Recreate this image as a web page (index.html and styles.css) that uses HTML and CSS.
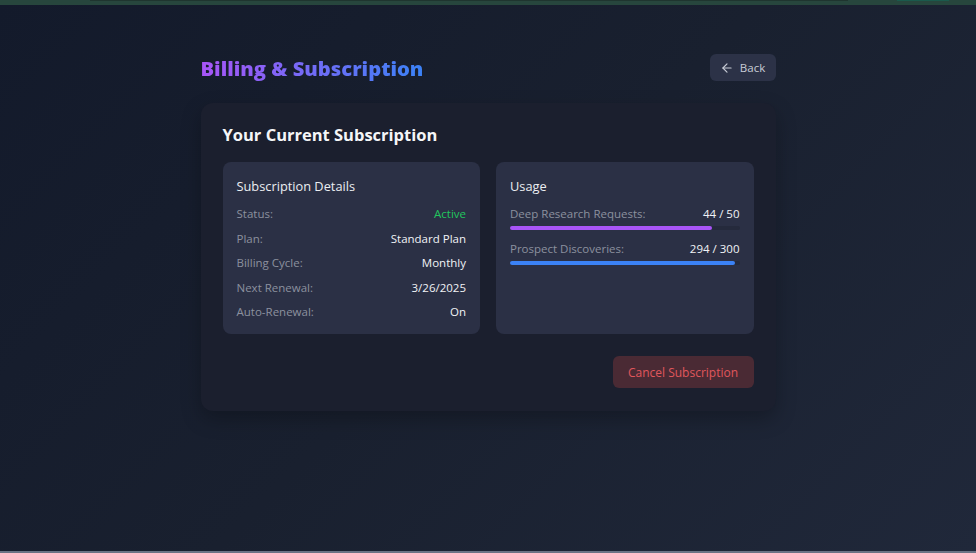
FILE: index.html
```html
<!DOCTYPE html>
<html>
<head>
<meta charset="utf-8">
<link rel="stylesheet" href="styles.css">
</head>
<body>
<div class="topbar"><div class="topbar-inner"></div><div class="topbar-accent"></div></div>
<main class="page">
  <header class="header">
    <h1 class="title">Billing &amp; Subscription</h1>
    <button class="back-btn">
      <svg class="back-icon" viewBox="0 0 24 24" width="14" height="14" fill="none" stroke="currentColor" stroke-width="2" stroke-linecap="round" stroke-linejoin="round"><path d="M19 12H5"/><path d="M12 19l-7-7 7-7"/></svg>
      <span>Back</span>
    </button>
  </header>
  <section class="card">
    <h2 class="card-title">Your Current Subscription</h2>
    <div class="panels">
      <div class="panel">
        <h3 class="panel-title">Subscription Details</h3>
        <div class="rows">
          <div class="row"><span class="label">Status:</span><span class="value active">Active</span></div>
          <div class="row"><span class="label">Plan:</span><span class="value">Standard Plan</span></div>
          <div class="row"><span class="label">Billing Cycle:</span><span class="value">Monthly</span></div>
          <div class="row"><span class="label">Next Renewal:</span><span class="value">3/26/2025</span></div>
          <div class="row"><span class="label">Auto-Renewal:</span><span class="value">On</span></div>
        </div>
      </div>
      <div class="panel">
        <h3 class="panel-title">Usage</h3>
        <div class="usage">
          <div class="usage-item">
            <div class="row"><span class="label">Deep Research Requests:</span><span class="value">44 / 50</span></div>
            <div class="track"><div class="fill purple" style="width:88%"></div></div>
          </div>
          <div class="usage-item">
            <div class="row"><span class="label">Prospect Discoveries:</span><span class="value">294 / 300</span></div>
            <div class="track"><div class="fill blue" style="width:98%"></div></div>
          </div>
        </div>
      </div>
    </div>
    <div class="actions">
      <button class="cancel-btn">Cancel Subscription</button>
    </div>
  </section>
</main>
<div class="bottom-line"></div>
</body>
</html>
```

FILE: styles.css
```css
* { box-sizing: border-box; }
html, body { height: 100%; }
body {
  margin: 0;
  font-family: "Open Sans", "Noto Sans", sans-serif;
  background: linear-gradient(135deg, #131a2b 0%, #19202f 50%, #20283a 100%);
  color: #f1f3f7;
  display: flex;
  flex-direction: column;
  overflow: hidden;
}
.topbar {
  height: 5px;
  background: #27463d;
  position: relative;
  flex-shrink: 0;
}
.topbar-inner {
  position: absolute;
  left: 90px; width: 758px; top: 0; height: 1px;
  background: #1f352f;
}
.topbar-accent {
  position: absolute;
  left: 897px; width: 52px; top: 0; height: 1px;
  background: #1a5a4c;
}
.page {
  flex: 1;
  width: 575px;
  margin: 0 auto;
  padding-top: 49px;
}
.header {
  display: flex;
  justify-content: space-between;
  align-items: center;
  height: 27px;
  margin-bottom: 22px;
}
.title {
  margin: 0;
  font-size: 20.2px;
  font-weight: 800;
  background: linear-gradient(90deg, #a855f7, #3b82f6);
  -webkit-background-clip: text;
  background-clip: text;
  color: transparent;
}
.back-btn {
  display: flex;
  align-items: center;
  gap: 6px;
  height: 27px;
  width: 66px;
  justify-content: center;
  border: none;
  border-radius: 6px;
  background: #2c3247;
  color: #c8ccd6;
  font-family: inherit;
  font-size: 11.5px;
}
.back-icon { display: block; }
.card {
  background: #1b1f2e;
  border-radius: 12px;
  padding: 20px 22px 23px;
  box-shadow: 0 8px 20px rgba(0,0,0,0.25);
}
.card-title {
  margin: 0 0 15px;
  font-size: 16.5px;
  line-height: 24px;
  font-weight: 700;
  color: #f5f6f8;
}
.panels {
  display: grid;
  grid-template-columns: 1fr 1fr;
  gap: 16px;
}
.panel {
  background: #2b3045;
  border-radius: 8px;
  padding: 14px 14px 0;
  height: 172px;
}
.panel-title {
  margin: 0 0 9px;
  font-size: 12.8px;
  line-height: 20px;
  font-weight: 400;
  color: #eceef2;
}
.rows {
  display: flex;
  flex-direction: column;
  gap: 7.5px;
}
.row {
  display: flex;
  justify-content: space-between;
  align-items: center;
  font-size: 11.5px;
  line-height: 17px;
}
.label { color: #8b909f; }
.value { color: #f1f3f6; }
.value.active { color: #22c55e; }
.usage {
  display: flex;
  flex-direction: column;
  gap: 10px;
}
.track {
  margin-top: 4px;
  height: 4px;
  border-radius: 2px;
  background: #252a3c;
}
.fill { height: 100%; border-radius: 2px; }
.fill.purple { background: #a855f7; }
.fill.blue { background: #3b82f6; }
.actions {
  display: flex;
  justify-content: flex-end;
  margin-top: 22px;
}
.cancel-btn {
  width: 141px;
  height: 32px;
  border: none;
  border-radius: 6px;
  background: #4a2a34;
  color: #e0575c;
  font-family: inherit;
  font-size: 12px;
}
.bottom-line {
  height: 2px;
  background: #6b7385;
  flex-shrink: 0;
}
```
